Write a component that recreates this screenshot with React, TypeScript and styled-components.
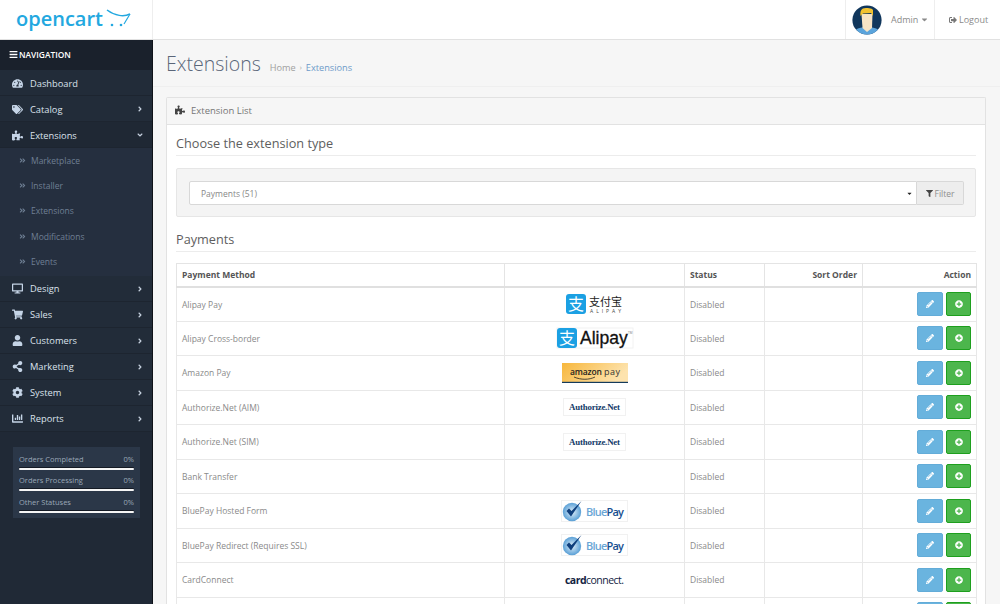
import React from "react";
import styled, { createGlobalStyle } from "styled-components";
import {
  FaTachometerAlt, FaTags, FaPuzzlePiece, FaDesktop, FaShoppingCart, FaUser, FaShareAlt, FaCog,
  FaChartBar, FaBars, FaAngleRight, FaAngleDown, FaAngleDoubleRight, FaPencilAlt, FaPlusCircle,
  FaFilter, FaSignOutAlt, FaCaretDown,
} from "react-icons/fa";

const Global = createGlobalStyle`
  html, body { margin: 0; padding: 0; height: 604px; overflow: hidden; background: #fff; }
  body { font-family: "Open Sans", "Liberation Sans", sans-serif; font-size: 9px; color: #666; }
  * { box-sizing: border-box; }
`;

const Page = styled.div`
  width: 1000px;
  height: 604px;
  display: flex;
  flex-direction: column;
  overflow: hidden;
`;
const Header = styled.header`
  height: 40px;
  flex: none;
  display: flex;
  align-items: stretch;
  background: #fff;
  border-bottom: 1px solid #e1e1e1;
`;
const Brand = styled.div`
  width: 153px;
  border-right: 1px solid #eee;
  display: flex;
  align-items: center;
  padding-left: 15px;
`;
const HeaderSpacer = styled.div`flex: 1;`;
const HeaderCell = styled.div<{ $w: number }>`
  width: ${(p) => p.$w}px;
  border-left: 1px solid #eee;
  display: flex;
  align-items: center;
  color: #8a8a8a;
  font-size: 9px;
`;
const AdminCell = styled(HeaderCell)`
  padding-left: 6px;
`;
const AdminName = styled.span`margin-left: 9px; margin-right: 2px;`;
const LogoutCell = styled(HeaderCell)`
  padding-left: 14px;
  gap: 2px;
  svg { color: #777; font-size: 8px; }
`;
const Body = styled.div`
  flex: 1;
  display: flex;
  min-height: 0;
`;
const Side = styled.aside`
  width: 153px;
  flex: none;
  background: #202936;
  border-right: 1px solid #0f1319;
  color: #c5d0de;
`;
const NavTitle = styled.div`
  height: 30px;
  background: #1a212c;
  color: #fff;
  font-size: 8.4px;
  font-weight: 600;
  display: flex;
  align-items: center;
  gap: 1px;
  padding: 0 0 2px 9px;
  svg { font-size: 9px; }
`;
const NavItem = styled.div<{ $open?: boolean }>`
  height: 26px;
  display: flex;
  align-items: center;
  padding: 1px 8px 0 12px;
  font-size: 9.3px;
  color: #dbe2ec;
  background: ${(p) => (p.$open ? "#1f2834" : "#222c39")};
  border-bottom: 1px solid #1d2530;
`;
const NavIcon = styled.span`
  width: 18px;
  display: flex;
  color: #c5d4e6;
  font-size: 11px;
`;
const NavLabel = styled.span`flex: 1;`;
const Chevron = styled.span`
  display: flex;
  font-size: 8px;
  color: #c5d0de;
`;
const Sub = styled.div`
  background: #252f3f;
  padding-bottom: 2px;
`;
const SubItem = styled.div`
  height: 25.2px;
  display: flex;
  align-items: center;
  padding-left: 19px;
  font-size: 8.5px;
  color: #6f7f94;
  svg { font-size: 7px; margin-right: 5px; }
`;
const Stats = styled.div`
  margin: 15px 12px 0 13px;
  height: 71px;
  background: #2b3748;
  padding: 7px 6px 0 6px;
`;
const StatRow = styled.div`
  height: 21.5px;
  font-size: 7.5px;
  color: #9aa7b7;
`;
const StatLabel = styled.div`
  display: flex;
  justify-content: space-between;
  line-height: 11px;
`;
const StatBar = styled.div`
  height: 2px;
  margin-top: 3px;
  background: #f5f5f5;
  border-radius: 1px;
  box-shadow: 0 -1px 0 #141a24;
`;
const Main = styled.main`
  flex: 1;
  background: #f6f6f6;
  min-width: 0;
  padding: 0 14px 0 13px;
`;
const PageHeader = styled.div`
  height: 47px;
  margin: 0 -14px 10px -13px;
  padding: 9px 0 0 13px;
  display: flex;
  align-items: baseline;
  border-bottom: 1px solid #efefef;
`;
const Title = styled.h1`
  margin: 0;
  font-weight: 300;
  font-size: 19.5px;
  line-height: 30px;
  color: #5a6679;
`;
const Crumbs = styled.div`
  margin-left: 9px;
  font-size: 9.2px;
  color: #a0a0a0;
  display: flex;
  gap: 4px;
  a { color: #6d9bc9; }
  i { font-style: normal; font-size: 7px; align-self: center; }
`;
const Panel = styled.section`
  background: #fff;
  border: 1px solid #e2e2e2;
  border-bottom: 0;
  border-radius: 2px 2px 0 0;
`;
const PanelHead = styled.div`
  height: 27px;
  background: #f6f6f6;
  border-bottom: 1px solid #e2e2e2;
  display: flex;
  align-items: center;
  padding: 0 0 2px 8px;
  gap: 6px;
  font-size: 9.5px;
  color: #777;
  svg { color: #444; font-size: 10px; }
`;
const PanelBody = styled.div`padding: 0 9px;`;
const Legend = styled.h2<{ $top: number; $h: number }>`
  margin: 0;
  padding-top: ${(p) => p.$top}px;
  height: ${(p) => p.$h}px;
  font-weight: 400;
  font-size: 12.7px;
  line-height: 17px;
  color: #5e5e5e;
  border-bottom: 1px solid #ececec;
`;
const Well = styled.div`
  margin-top: 12px;
  height: 49px;
  background: #f4f4f4;
  border: 1px solid #e6e6e6;
  border-radius: 2px;
  padding: 12px 11px 12px 12px;
  display: flex;
`;
const SelectBox = styled.div`
  flex: 1;
  height: 24px;
  background: #fff;
  border: 1px solid #d8d8d8;
  border-radius: 2px 0 0 2px;
  display: flex;
  align-items: center;
  justify-content: space-between;
  padding: 0 3px 0 11px;
  font-size: 8.5px;
  color: #888;
  svg { color: #222; font-size: 7px; }
`;
const FilterBtn = styled.div`
  width: 47px;
  height: 24px;
  background: #ededed;
  border: 1px solid #d8d8d8;
  border-left: 0;
  border-radius: 0 2px 2px 0;
  display: flex;
  align-items: center;
  justify-content: center;
  gap: 2px;
  font-size: 8.5px;
  color: #8f8f8f;
  svg { color: #444; font-size: 7px; }
`;
const Table = styled.table`
  margin-top: 11px;
  width: 800px;
  table-layout: fixed;
  border-collapse: collapse;
  font-size: 8.5px;
  color: #8a8a8a;
`;
const Th = styled.th<{ $right?: boolean }>`
  height: 23px;
  padding: 0 5px;
  font-weight: 700;
  font-size: 8.5px;
  color: #555;
  text-align: ${(p) => (p.$right ? "right" : "left")};
  border: 1px solid #e4e4e4;
  border-bottom: 2px solid #e0e0e0;
`;
const Td = styled.td<{ $center?: boolean }>`
  height: 34.5px;
  padding: 0 5px;
  border: 1px solid #e8e8e8;
  text-align: ${(p) => (p.$center ? "center" : "left")};
  vertical-align: middle;
`;
const Actions = styled.div`
  display: flex;
  justify-content: flex-end;
  gap: 3px;
`;
const IconBtn = styled.div<{ $green?: boolean }>`
  width: ${(p) => (p.$green ? 25 : 26)}px;
  height: 24px;
  border-radius: 2px;
  display: flex;
  align-items: center;
  justify-content: center;
  color: #fff;
  font-size: 8px;
  background: ${(p) => (p.$green ? "#4cb64c" : "#6ab4df")};
  border: 1px solid ${(p) => (p.$green ? "#1e9f1e" : "#63acd8")};
`;
const LogoSvg = styled.svg`
  display: block;
  margin: 0 auto;
  overflow: visible;
`;
const BrandSvg = styled.svg`
  display: block;
  overflow: visible;
`;

const BrandLogo = () => (
  <BrandSvg width="118" height="26" viewBox="0 0 118 26">
    <text x="1" y="19" fontFamily="'Open Sans', sans-serif" fontWeight="600" fontSize="20" textLength="87" fill="#23a8e0">opencart</text>
    <path d="M92 3 C100 9 109 10 115 7" fill="none" stroke="#23a8e0" strokeWidth="1.5" />
    <path d="M115 7 L109 17" stroke="#23a8e0" strokeWidth="1.2" />
    <circle cx="97" cy="18" r="1.3" fill="#23a8e0" />
    <circle cx="106" cy="18" r="1.3" fill="#23a8e0" />
  </BrandSvg>
);
const Avatar = () => (
  <svg width="30" height="30" viewBox="0 0 30 30">
    <circle cx="15" cy="15" r="14.6" fill="#10365c" />
    <path d="M4 24.5 C8 21 22 21 26 24.5 A14.6 14.6 0 0 1 4 24.5Z" fill="#5ba4dc" />
    <path d="M9.5 9 H20.5 L20 23 L15 27 L10.5 23Z" fill="#f7e4c6" />
    <path d="M8.5 11 C8 6 9 3 14 3 C19 3 21.5 4 21 6 L21 11 L19 8 L11 8.5Z" fill="#f2c230" />
  </svg>
);
const AlipayMark = ({ s }: { s: number }) => (
  <g>
    <rect width={s} height={s} rx="3" fill="#1ba0e3" />
    <text x={s / 2} y={s * 0.8} textAnchor="middle" fontSize={s * 0.8} fill="#fff" fontFamily="'Noto Sans CJK SC', sans-serif">支</text>
  </g>
);
const Alipay1 = () => (
  <LogoSvg width="57" height="20" viewBox="0 0 57 20">
    <rect width="57" height="20" fill="#fff" />
    <AlipayMark s={20} />
    <text x="23" y="11.5" fontSize="11" fill="#222" textLength="33" fontFamily="'Noto Sans CJK SC', sans-serif">支付宝</text>
    <text x="24" y="19" fontSize="5" fill="#444" textLength="31" fontFamily="'Open Sans', sans-serif">ALIPAY</text>
  </LogoSvg>
);
const Alipay2 = () => (
  <LogoSvg width="76" height="20" viewBox="0 0 76 20">
    <rect width="76" height="20" fill="#fff" stroke="#f2f2f2" />
    <AlipayMark s={20} />
    <text x="23" y="15.5" fontSize="17.5" fontWeight="400" stroke="#111" strokeWidth="0.3" fill="#111" fontFamily="'Liberation Sans', sans-serif">Alipay</text>
    <text x="71" y="6" fontSize="3" fill="#777">TM</text>
  </LogoSvg>
);
const AmazonPay = () => (
  <LogoSvg width="66" height="20" viewBox="0 0 66 20">
    <defs>
      <linearGradient id="amz" x1="0" y1="0" x2="1" y2="0.3">
        <stop offset="0" stopColor="#f7b73c" />
        <stop offset="1" stopColor="#fde3ae" />
      </linearGradient>
    </defs>
    <rect width="66" height="20" fill="url(#amz)" />
    <rect y="18.8" width="66" height="1.2" fill="#143b5c" />
    <text x="8" y="12" fontSize="8.5" fontWeight="600" fill="#222" textLength="32" fontFamily="'Open Sans', sans-serif">amazon</text>
    <text x="42" y="12" fontSize="9" fill="#333" textLength="16" fontFamily="'Open Sans', sans-serif">pay</text>
    <path d="M12 14 C19 17 27 17 33 14" fill="none" stroke="#222" strokeWidth="0.8" />
  </LogoSvg>
);
const AuthorizeNet = () => (
  <LogoSvg width="63" height="18" viewBox="0 0 63 18">
    <rect x="0.5" y="0.5" width="62" height="17" fill="#fff" stroke="#f1f1f1" />
    <text x="31.5" y="12" textAnchor="middle" fontSize="8.8" fontWeight="700" fill="#123a68" textLength="51" fontFamily="'Liberation Serif', serif">Authorize.Net</text>
  </LogoSvg>
);
const BluePay = ({ id }: { id: string }) => (
  <LogoSvg width="67" height="22" viewBox="0 0 67 22">
    <defs>
      <radialGradient id={id} cx="0.5" cy="0.5" r="0.6">
        <stop offset="0" stopColor="#e3f0fa" />
        <stop offset="1" stopColor="#3f90cf" />
      </radialGradient>
    </defs>
    <rect x="0.5" y="0.5" width="66" height="21" fill="#fff" stroke="#f1f1f1" />
    <circle cx="11" cy="12" r="9.2" fill={`url(#${id})`} />
    <path d="M5.5 11 L10 16.5 L20.5 1 L10.5 11 L8 8.5Z" fill="#0f3f7d" />
    <text x="25" y="16" fontSize="11" fontWeight="600" fill="#6aa6d6" textLength="38" fontFamily="'Open Sans', sans-serif">Blue<tspan fill="#164f90">Pay</tspan></text>
  </LogoSvg>
);
const CardConnect = () => (
  <LogoSvg width="62" height="14" viewBox="0 0 62 14">
    <text x="1" y="11" fontSize="10.5" fontWeight="700" fill="#12233f" textLength="59" fontFamily="'Open Sans', sans-serif">card<tspan fontWeight="400">connect.</tspan></text>
  </LogoSvg>
);

const nav = [
  { icon: <FaTachometerAlt />, label: "Dashboard" },
  { icon: <FaTags />, label: "Catalog", more: true },
  { icon: <FaPuzzlePiece />, label: "Extensions", open: true },
];
const nav2 = [
  { icon: <FaDesktop />, label: "Design" },
  { icon: <FaShoppingCart />, label: "Sales" },
  { icon: <FaUser />, label: "Customers" },
  { icon: <FaShareAlt />, label: "Marketing" },
  { icon: <FaCog />, label: "System" },
  { icon: <FaChartBar />, label: "Reports" },
];
const subs = ["Marketplace", "Installer", "Extensions", "Modifications", "Events"];
const stats = ["Orders Completed", "Orders Processing", "Other Statuses"];
const rows: [string, React.ReactNode, string][] = [
  ["Alipay Pay", <Alipay1 />, "Disabled"],
  ["Alipay Cross-border", <Alipay2 />, "Disabled"],
  ["Amazon Pay", <AmazonPay />, "Disabled"],
  ["Authorize.Net (AIM)", <AuthorizeNet />, "Disabled"],
  ["Authorize.Net (SIM)", <AuthorizeNet />, "Disabled"],
  ["Bank Transfer", null, "Disabled"],
  ["BluePay Hosted Form", <BluePay id="bp1" />, "Disabled"],
  ["BluePay Redirect (Requires SSL)", <BluePay id="bp2" />, "Disabled"],
  ["CardConnect", <CardConnect />, "Disabled"],
  ["", null, ""],
];

export default function App() {
  return (
    <Page>
      <Global />
      <Header>
        <Brand><BrandLogo /></Brand>
        <HeaderSpacer />
        <AdminCell $w={89}>
          <Avatar />
          <AdminName>Admin</AdminName>
          <FaCaretDown />
        </AdminCell>
        <LogoutCell $w={66}>
          <FaSignOutAlt />
          <span>Logout</span>
        </LogoutCell>
      </Header>
      <Body>
        <Side>
          <NavTitle><FaBars /> NAVIGATION</NavTitle>
          {nav.map((n) => (
            <NavItem key={n.label} $open={n.open}>
              <NavIcon>{n.icon}</NavIcon>
              <NavLabel>{n.label}</NavLabel>
              {n.more && <Chevron><FaAngleRight /></Chevron>}
              {n.open && <Chevron><FaAngleDown /></Chevron>}
            </NavItem>
          ))}
          <Sub>
            {subs.map((s) => (
              <SubItem key={s}><FaAngleDoubleRight />{s}</SubItem>
            ))}
          </Sub>
          {nav2.map((n) => (
            <NavItem key={n.label}>
              <NavIcon>{n.icon}</NavIcon>
              <NavLabel>{n.label}</NavLabel>
              <Chevron><FaAngleRight /></Chevron>
            </NavItem>
          ))}
          <Stats>
            {stats.map((s) => (
              <StatRow key={s}>
                <StatLabel><span>{s}</span><span>0%</span></StatLabel>
                <StatBar />
              </StatRow>
            ))}
          </Stats>
        </Side>
        <Main>
          <PageHeader>
            <Title>Extensions</Title>
            <Crumbs>
              <span>Home</span><i>›</i><a>Extensions</a>
            </Crumbs>
          </PageHeader>
          <Panel>
            <PanelHead><FaPuzzlePiece /> Extension List</PanelHead>
            <PanelBody>
              <Legend $top={10} $h={31}>Choose the extension type</Legend>
              <Well>
                <SelectBox>
                  <span>Payments (51)</span>
                  <FaCaretDown />
                </SelectBox>
                <FilterBtn><FaFilter /> Filter</FilterBtn>
              </Well>
              <Legend $top={14} $h={35}>Payments</Legend>
              <Table>
                <colgroup>
                  <col width="328" /><col width="180" /><col width="80" /><col width="98" /><col width="114" />
                </colgroup>
                <thead>
                  <tr>
                    <Th>Payment Method</Th>
                    <Th />
                    <Th>Status</Th>
                    <Th $right>Sort Order</Th>
                    <Th $right>Action</Th>
                  </tr>
                </thead>
                <tbody>
                  {rows.map(([name, logo, status], i) => (
                    <tr key={i}>
                      <Td>{name}</Td>
                      <Td $center>{logo}</Td>
                      <Td>{status}</Td>
                      <Td />
                      <Td>
                        <Actions>
                          <IconBtn><FaPencilAlt /></IconBtn>
                          <IconBtn $green><FaPlusCircle /></IconBtn>
                        </Actions>
                      </Td>
                    </tr>
                  ))}
                </tbody>
              </Table>
            </PanelBody>
          </Panel>
        </Main>
      </Body>
    </Page>
  );
}
